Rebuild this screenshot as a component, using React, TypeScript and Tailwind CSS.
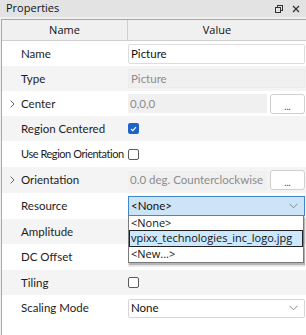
import React from 'react'

type Row = {
  label: string
  expandable?: boolean
  kind: 'text' | 'disabled' | 'button' | 'check' | 'combo' | 'openCombo' | 'none'
  value?: string
  checked?: boolean
  h: string
  tight?: boolean
}

const rows: Row[] = [
  { label: 'Name', kind: 'text', value: 'Picture', h: 'h-[25px]' },
  { label: 'Type', kind: 'disabled', value: 'Picture', h: 'h-[25px]' },
  { label: 'Center', expandable: true, kind: 'button', value: '0,0,0', h: 'h-[25px]' },
  { label: 'Region Centered', kind: 'check', checked: true, h: 'h-[25px]' },
  { label: 'Use Region Orientation', kind: 'check', checked: false, h: 'h-[26px]', tight: true },
  { label: 'Orientation', expandable: true, kind: 'button', value: '0.0 deg. Counterclockwise', h: 'h-[26px]' },
  { label: 'Resource', kind: 'openCombo', value: '<None>', h: 'h-[26px]' },
  { label: 'Amplitude', kind: 'none', h: 'h-[25px]' },
  { label: 'DC Offset', kind: 'disabled', value: '0.0', h: 'h-[26px]' },
  { label: 'Tiling', kind: 'check', checked: false, h: 'h-[25px]' },
  { label: 'Scaling Mode', kind: 'combo', value: 'None', h: 'h-[26px]' },
]

function Chevron({ className = '' }: { className?: string }) {
  return (
    <svg width="9" height="6" viewBox="0 0 9 6" className={className}>
      <path d="M0.5 0.8 L4.5 4.8 L8.5 0.8" fill="none" stroke="#8a8a8a" strokeWidth="1" />
    </svg>
  )
}

function CheckBox({ checked }: { checked?: boolean }) {
  if (checked) {
    return (
      <div className="w-[11px] h-[11px] rounded-[2px] bg-[#1c64c8] flex items-center justify-center">
        <svg width="7" height="6" viewBox="0 0 7 6">
          <path d="M1 3 L2.8 4.7 L6 1.2" fill="none" stroke="#fff" strokeWidth="1.1" />
        </svg>
      </div>
    )
  }
  return <div className="w-[11px] h-[11px] rounded-[2px] border border-[#5a5a5a] bg-white" />
}

function Value({ row }: { row: Row }) {
  switch (row.kind) {
    case 'text':
      return (
        <div className="h-[20px] flex-1 border border-[#dcdcdc] rounded-[2px] bg-white flex items-center px-[2px] text-[#111]">
          {row.value}
        </div>
      )
    case 'disabled':
      return (
        <div className="h-[19px] flex-1 border border-[#ececec] bg-[#f0f0f0] flex items-center px-[2px] text-[#8c8c8c]">
          {row.value}
        </div>
      )
    case 'button':
      return (
        <div className="flex-1 flex items-center gap-[3px]">
          <div className="h-[19px] flex-1 bg-[#f0f0f0] flex items-center px-[2px] text-[#8c8c8c]">
            {row.value}
          </div>
          <div className="w-[35px] h-[20px] rounded-[3px] border border-[#cfcfcf] bg-white flex items-end justify-center pb-[2px] text-[9px] leading-none text-[#333]">
            ...
          </div>
        </div>
      )
    case 'check':
      return <CheckBox checked={row.checked} />
    case 'combo':
      return (
        <div className="h-[19px] flex-1 border border-[#d6d6d6] rounded-[2px] bg-white flex items-center justify-between px-[2px] pr-[6px] text-[#111]">
          <span>{row.value}</span>
          <Chevron />
        </div>
      )
    case 'openCombo':
      return (
        <div className="h-[20px] flex-1 border border-[#3f86d0] bg-[#cde4f7] flex items-center justify-between px-[2px] pr-[6px] text-[#111]">
          <span>{row.value}</span>
          <Chevron />
        </div>
      )
    default:
      return null
  }
}

export default function App() {
  return (
    <div className="w-[306px] h-[335px] bg-[#f0f0f0] overflow-hidden relative" style={{ fontFamily: '"Open Sans", sans-serif' }}>
      {/* Title bar */}
      <div className="h-[17px] bg-[#e3e3e3] flex items-center justify-between pl-[6px] pr-[6px] text-[11px] text-[#111]">
        <span>Properties</span>
        <div className="flex items-center gap-[9px]">
          <svg width="8" height="8" viewBox="0 0 8 8">
            <rect x="2.5" y="0.5" width="5" height="5" fill="none" stroke="#333" strokeWidth="1" />
            <rect x="0.5" y="2.5" width="5" height="5" fill="#e3e3e3" stroke="#333" strokeWidth="1" />
          </svg>
          <svg width="8" height="8" viewBox="0 0 8 8">
            <path d="M1 1 L7 7 M7 1 L1 7" stroke="#333" strokeWidth="1.3" />
          </svg>
        </div>
      </div>

      <div className="mt-[2px] ml-[1px] border-l border-t border-[#a8a8a8] bg-white h-[330px]">
        {/* Header */}
        <div className="h-[21px] grid grid-cols-[126px_1fr] bg-[#f0f0f0] border-b border-[#cfcfcf] text-[11px] text-[#111]">
          <div className="flex items-center justify-center border-r border-[#cfcfcf]">Name</div>
          <div className="flex items-center justify-center">Value</div>
        </div>

        {/* Rows */}
        <div style={{ fontFamily: 'Lato, sans-serif' }} className="text-[11.5px] text-[#1c1c1c]">
          {rows.map((row, i) => (
            <div key={row.label} className={`${row.h} flex items-center ${i % 2 === 1 ? 'bg-[#f4f4f4]' : 'bg-white'}`}>
              <div className="w-[126px] flex items-center shrink-0 overflow-hidden">
                <div className="w-[19px] shrink-0 flex justify-center pl-[2px] text-[#666]">
                  {row.expandable && (
                    <svg width="5" height="8" viewBox="0 0 5 8">
                      <path d="M0.6 0.6 L4 4 L0.6 7.4" fill="none" stroke="#666" strokeWidth="1" />
                    </svg>
                  )}
                </div>
                <span className={`whitespace-nowrap ${row.tight ? 'text-[11px] tracking-[-0.45px]' : ''}`}>{row.label}</span>
              </div>
              <div className="flex-1 flex items-center pr-[1px]">
                <Value row={row} />
              </div>
            </div>
          ))}
        </div>
      </div>

      {/* Open dropdown list */}
      <div
        className="absolute left-[128px] top-[215px] w-[176px] h-[48px] bg-white border border-[#7a7a7a] shadow-[1px_2px_1px_rgba(0,0,0,0.25)] flex flex-col text-[11px] text-[#111]"
        style={{ fontFamily: '"Open Sans", sans-serif' }}
      >
        <div className="h-[14px] flex items-center px-[2px]">&lt;None&gt;</div>
        <div className="h-[17px] flex items-center px-[1px] bg-[#cce8ff] border border-[#222]">vpixx_technologies_inc_logo.jpg</div>
        <div className="h-[15px] flex items-center px-[2px]">&lt;New...&gt;</div>
      </div>
    </div>
  )
}
